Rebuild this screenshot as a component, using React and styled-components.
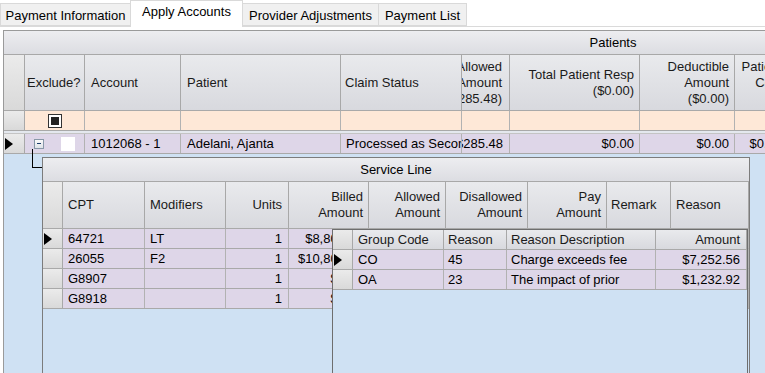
import React from 'react';
import styled, { createGlobalStyle } from 'styled-components';

const GlobalStyle = createGlobalStyle`
  html, body {
    margin: 0;
    padding: 0;
    background: #ffffff;
  }
  body {
    font-family: "Liberation Sans", Arial, sans-serif;
    font-size: 13px;
    color: #000;
  }
  * {
    box-sizing: border-box;
  }
`;

const Page = styled.div`
  width: 765px;
  height: 373px;
  overflow: hidden;
  background: #fff;
`;

const TabStrip = styled.div`
  display: flex;
  align-items: flex-end;
  height: 27px;
  border-bottom: 1px solid #dadada;
`;

const Tab = styled.div`
  flex: none;
  width: ${p => p.$w}px;
  height: ${p => (p.$active ? 27 : 23)}px;
  margin-bottom: ${p => (p.$active ? -1 : 0)}px;
  margin-right: -1px;
  padding-top: ${p => (p.$active ? 3 : 4)}px;
  text-align: center;
  white-space: nowrap;
  background: ${p => (p.$active ? '#ffffff' : '#f0f0f0')};
  border: 1px solid #d9d9d9;
  border-bottom: ${p => (p.$active ? 'none' : '1px solid #d9d9d9')};
  position: relative;
  z-index: ${p => (p.$active ? 1 : 0)};
`;

const TabBody = styled.div`
  padding: 3px 0 0 3px;
`;

const Grid = styled.div`
  width: 1220px;
  height: 360px;
  display: flex;
  flex-direction: column;
  border: 1px solid #9a9a9a;
  background: #cfe1f3;
`;

const BandHeader = styled.div`
  flex: none;
  height: 24px;
  line-height: 23px;
  text-align: center;
  background: linear-gradient(#ededf0, #dcdde2);
  border-bottom: 1px solid #a8a8a8;
  white-space: nowrap;
`;

const Row = styled.div`
  flex: none;
  display: flex;
  height: ${p => p.$h}px;
  background: ${p => p.$bg || 'transparent'};
  border-bottom: 1px solid #a9a9a9;
`;

const HeaderCell = styled.div`
  flex: none;
  width: ${p => p.$w}px;
  display: flex;
  flex-direction: column;
  justify-content: center;
  align-items: ${p => (p.$right ? 'flex-end' : 'flex-start')};
  padding: 0 ${p => (p.$right ? p.$pr ?? 5 : 0)}px 0 ${p => (p.$right ? 0 : p.$pl ?? 6)}px;
  line-height: 16px;
  white-space: nowrap;
  overflow: hidden;
  color: #1a1a1a;
  background: linear-gradient(#e9eaed, #d8d9de);
  border-right: 1px solid #a8a8a8;
`;

const Cell = styled.div`
  flex: none;
  width: ${p => p.$w}px;
  display: flex;
  align-items: center;
  justify-content: ${p => (p.$right ? 'flex-end' : p.$center ? 'center' : 'flex-start')};
  padding: 0 ${p => (p.$right ? p.$pr ?? 5 : 0)}px 0 ${p => (p.$right || p.$center ? 0 : p.$pl ?? 6)}px;
  white-space: nowrap;
  overflow: hidden;
  border-right: 1px solid #b2b2b2;
`;

const SelectorCell = styled.div`
  flex: none;
  width: ${p => p.$w}px;
  display: flex;
  align-items: center;
  padding-left: 1px;
  background: linear-gradient(#ebebeb, #d9d9d9);
  border-right: 1px solid #a8a8a8;
`;

const RowArrow = styled.span`
  width: 0;
  height: 0;
  border-top: 6px solid transparent;
  border-bottom: 6px solid transparent;
  border-left: 8px solid #000;
`;

const Separator = styled.div`
  flex: none;
  height: 3px;
  background: #e4e8ee;
  border-bottom: 1px solid #c4c4c4;
`;

const FilterBox = styled.span`
  width: 14px;
  height: 14px;
  border: 1px solid #333;
  background: #fff;
  padding: 2px;
  display: flex;

  &::after {
    content: '';
    flex: 1;
    background: #222;
  }
`;

const CheckBox = styled.span`
  flex: none;
  width: 14px;
  height: 14px;
  background: #fff;
  margin-left: ${p => p.$ml || 0}px;
`;

const Expander = styled.span`
  flex: none;
  width: 10px;
  height: 10px;
  margin-left: 3px;
  border: 1px solid #8898a8;
  background: linear-gradient(#fafafa, #dfe3e8);
  display: flex;
  align-items: center;
  justify-content: center;

  &::after {
    content: '';
    width: 4px;
    height: 1px;
    background: #1c3c6c;
  }
`;

const ChildArea = styled.div`
  flex: 1;
  display: flex;
  padding: 3px 0 0 38px;
  position: relative;
  background: #cfe1f3;
`;

const Connector = styled.div`
  position: absolute;
  left: 28px;
  top: -5px;
  width: 11px;
  height: 19px;
  border-left: 1px solid #000;
  border-bottom: 1px solid #000;
`;

const ChildBand = styled.div`
  flex: none;
  width: 708px;
  display: flex;
  flex-direction: column;
  border: 1px solid #7c7c7c;
  border-bottom: none;
  background: #cfe1f3;
  position: relative;
`;

const NestedGrid = styled.div`
  position: absolute;
  left: 289px;
  top: 71px;
  width: 416px;
  height: 160px;
  display: flex;
  flex-direction: column;
  border: 1px solid #6e6e6e;
  border-bottom: none;
  background: #cfe1f3;
`;

const LAVENDER = '#ded6e8';
const PEACH = '#fee8d7';

const mainCols = [
  { w: 60, title: ['Exclude?'], pl: 2 },
  { w: 96, title: ['Account'] },
  { w: 160, title: ['Patient'] },
  { w: 121, title: ['Claim Status'], pl: 4 },
  { w: 48, title: ['Allowed', 'Amount', '($285.48)'], right: true, pr: 7 },
  { w: 130, title: ['Total Patient Resp', '($0.00)'], right: true },
  { w: 95, title: ['Deductible', 'Amount', '($0.00)'], right: true },
  { w: 53, title: ['Patient', 'Cost', '\u00a0'], right: true },
  { w: 120, title: ['Coinsurance', 'Amount', '($0.00)'], right: true },
  { w: 120, title: ['Paid Amount', '($0.00)'], right: true },
  { w: 120, title: ['Balance'], right: true },
  { w: 74, title: [''] },
];

const mainRow = ['', '1012068 - 1', 'Adelani, Ajanta', 'Processed as Secondary', '$285.48', '$0.00', '$0.00', '$0.00', '$0.00', '$0.00', '$0.00', ''];

const serviceCols = [
  { w: 82, title: ['CPT'], pl: 5 },
  { w: 81, title: ['Modifiers'], pl: 5 },
  { w: 63, title: ['Units'], right: true, pr: 6 },
  { w: 80, title: ['Billed', 'Amount'], right: true },
  { w: 77, title: ['Allowed', 'Amount'], right: true },
  { w: 82, title: ['Disallowed', 'Amount'], right: true },
  { w: 79, title: ['Pay', 'Amount'], right: true },
  { w: 64, title: ['Remark'], pl: 4 },
  { w: 78, title: ['Reason'], pl: 5 },
];

// columns to the right of Billed Amount sit under the reason grid
const serviceRows = [
  { current: true, cells: ['64721', 'LT', '1', '$8,800.00', '', '', '', '', ''] },
  { cells: ['26055', 'F2', '1', '$10,800.00', '', '', '', '', ''] },
  { cells: ['G8907', '', '1', '$0.00', '', '', '', '', ''] },
  { cells: ['G8918', '', '1', '$0.00', '', '', '', '', ''] },
];

const reasonCols = [
  { w: 91, title: 'Group Code', pl: 5 },
  { w: 63, title: 'Reason', pl: 4 },
  { w: 149, title: 'Reason Description', pl: 4 },
  { w: 91, title: 'Amount', right: true, pr: 6 },
];

const reasonRows = [
  { current: true, cells: ['CO', '45', 'Charge exceeds fee', '$7,252.56'] },
  { cells: ['OA', '23', 'The impact of prior', '$1,232.92'] },
];

const tabs = [
  { label: 'Payment Information', w: 131 },
  { label: 'Apply Accounts', w: 113, active: true },
  { label: 'Provider Adjustments', w: 137 },
  { label: 'Payment List', w: 89 },
];

function HeaderRow({ cols, h, selW }) {
  return (
    <Row $h={h}>
      <SelectorCell $w={selW} />
      {cols.map((c, i) => (
        <HeaderCell key={i} $w={c.w} $right={c.right} $pl={c.pl} $pr={c.pr}>
          {(Array.isArray(c.title) ? c.title : [c.title]).map((line, j) => (
            <span key={j}>{line}</span>
          ))}
        </HeaderCell>
      ))}
    </Row>
  );
}

function DataRows({ cols, rows, selW }) {
  return rows.map((r, i) => (
    <Row key={i} $h={20} $bg={LAVENDER}>
      <SelectorCell $w={selW}>{r.current && <RowArrow />}</SelectorCell>
      {cols.map((c, j) => (
        <Cell key={j} $w={c.w} $right={c.right} $pl={c.pl ?? 5} $pr={c.pr}>
          {r.cells[j]}
        </Cell>
      ))}
    </Row>
  ));
}

export default function App() {
  return (
    <Page>
      <GlobalStyle />
      <TabStrip>
        {tabs.map(t => (
          <Tab key={t.label} $w={t.w} $active={t.active}>
            {t.label}
          </Tab>
        ))}
      </TabStrip>

      <TabBody>
        <Grid>
          <BandHeader>Patients</BandHeader>
          <HeaderRow cols={mainCols} h={56} selW={21} />

          <Row $h={20} $bg={PEACH}>
            <SelectorCell $w={21} />
            {mainCols.map((c, i) => (
              <Cell key={i} $w={c.w} $center={i === 0}>
                {i === 0 && <FilterBox />}
              </Cell>
            ))}
          </Row>

          <Separator />

          <Row $h={20} $bg={LAVENDER}>
            <SelectorCell $w={21}>
              <RowArrow />
            </SelectorCell>
            {mainCols.map((c, i) => (
              <Cell key={i} $w={c.w} $right={c.right} $pl={i === 3 ? 5 : 6} $pr={i === 4 ? 6 : c.pr}>
                {i === 0 ? (
                  <>
                    <Expander />
                    <CheckBox $ml={17} />
                  </>
                ) : (
                  mainRow[i]
                )}
              </Cell>
            ))}
          </Row>

          <ChildArea>
            <Connector />
            <ChildBand>
              <BandHeader>Service Line</BandHeader>
              <HeaderRow cols={serviceCols} h={47} selW={20} />
              <DataRows cols={serviceCols} rows={serviceRows} selW={20} />

              <NestedGrid>
                <HeaderRow cols={reasonCols} h={20} selW={20} />
                <DataRows cols={reasonCols} rows={reasonRows} selW={20} />
              </NestedGrid>
            </ChildBand>
          </ChildArea>
        </Grid>
      </TabBody>
    </Page>
  );
}
